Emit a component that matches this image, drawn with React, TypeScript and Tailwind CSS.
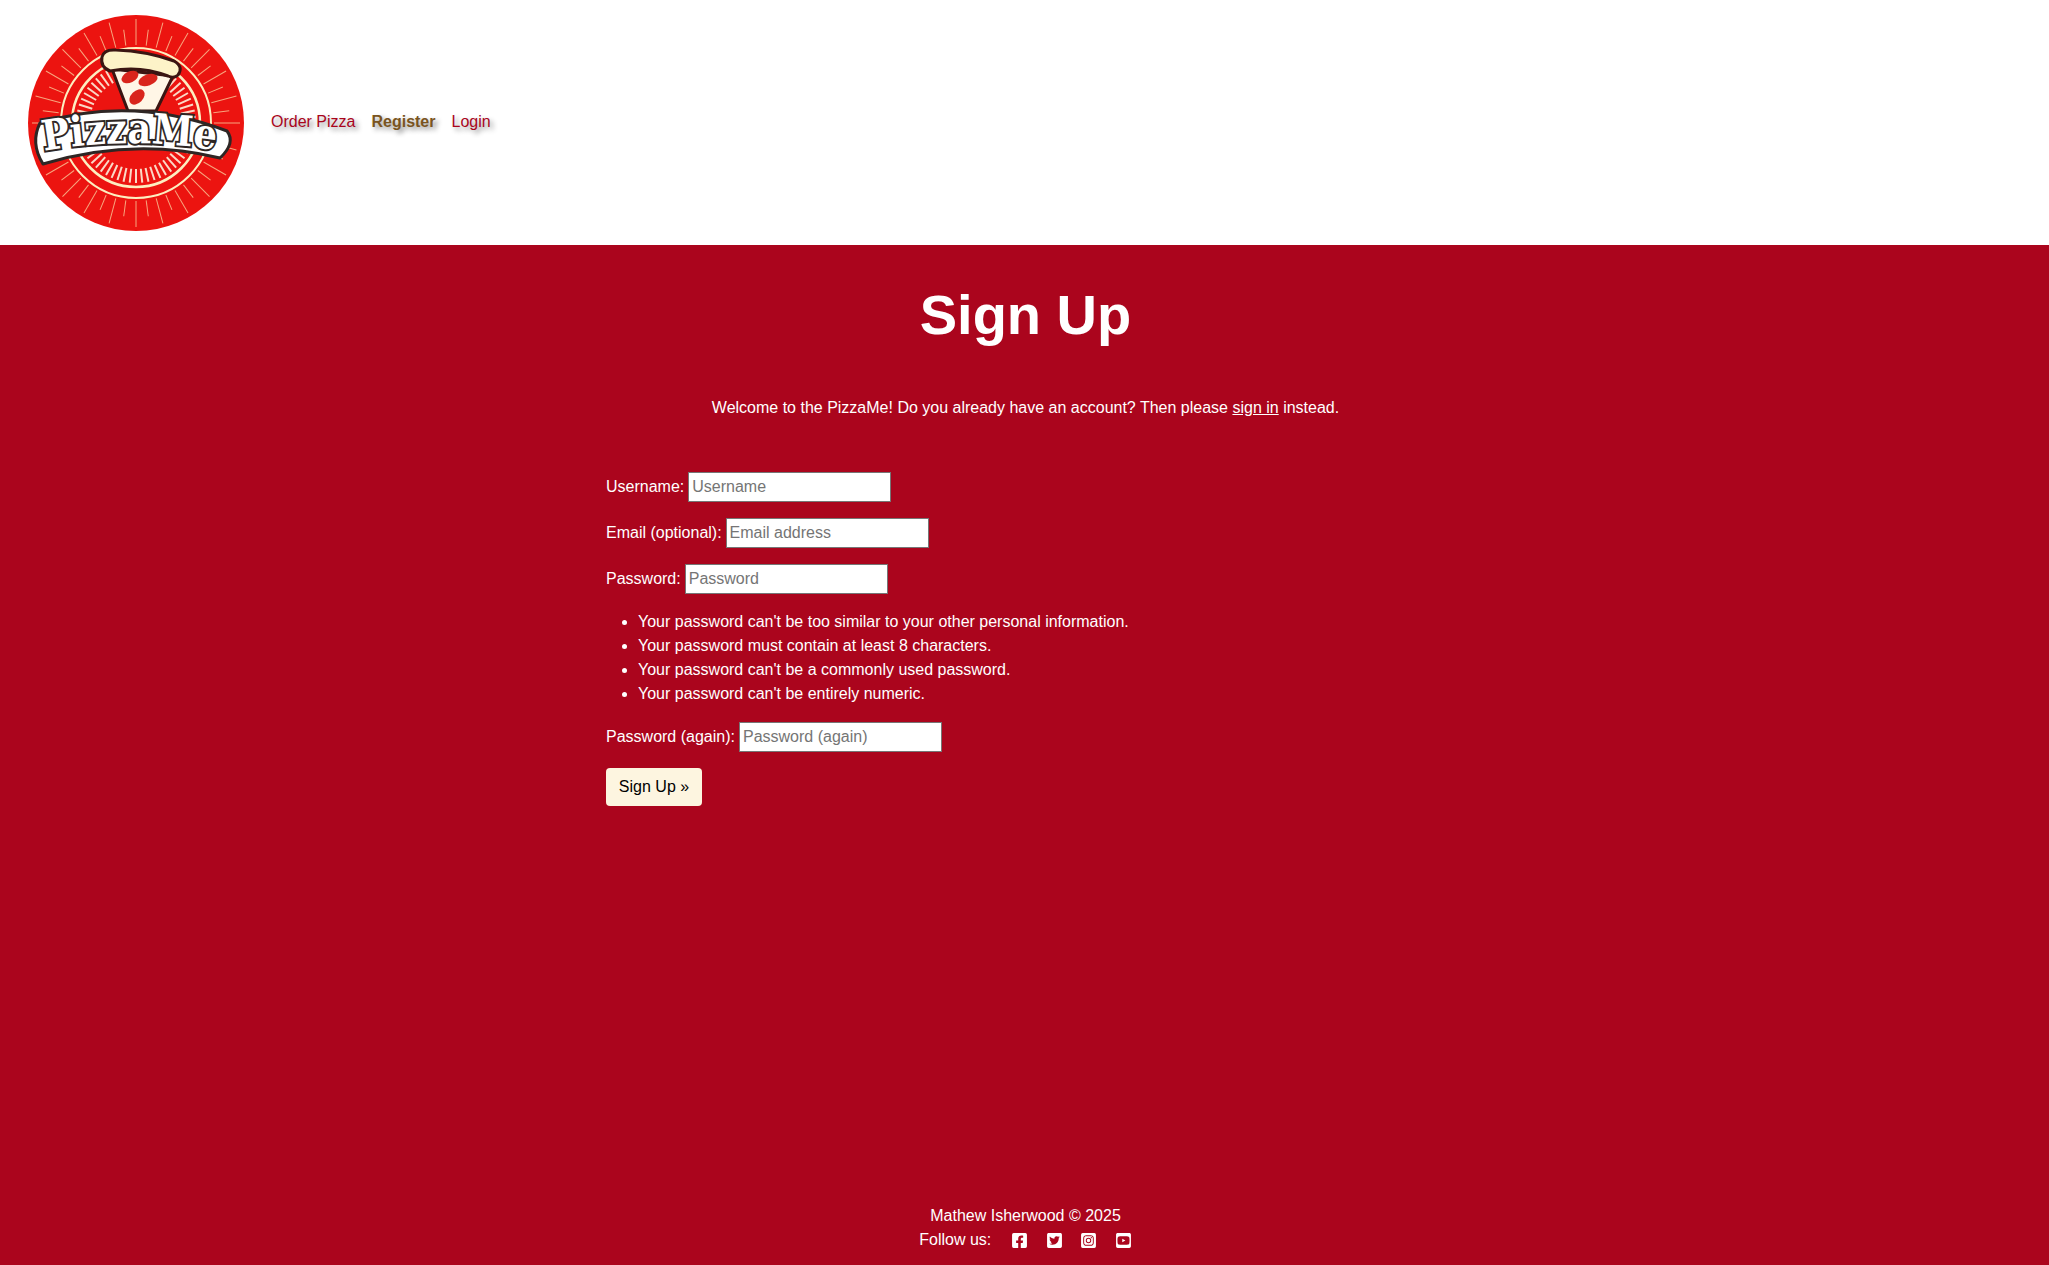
import React from "react";
import { FaFacebookSquare, FaTwitterSquare, FaInstagramSquare, FaYoutubeSquare } from "react-icons/fa";

const rays = Array.from({ length: 48 }, (_, i) => (i * 360) / 48);
const hatch = Array.from({ length: 60 }, (_, i) => (i * 360) / 60);

function Logo() {
    return (
        <svg width="216" height="216" viewBox="0 0 216 216" className="shrink-0">
            <defs>
                <path id="logoCurve" d="M 16 136 Q 105 120 198 137" fill="none" />
            </defs>
            <circle cx="108" cy="108" r="108" fill="#ec1410" />
            {rays.map((deg, i) => (
                <line
                    key={deg}
                    x1="108"
                    y1={i % 2 === 0 ? 4 : 14}
                    x2="108"
                    y2="30"
                    stroke="#f7a67e"
                    strokeWidth="1"
                    transform={`rotate(${deg} 108 108)`}
                />
            ))}
            <circle cx="108" cy="108" r="75" fill="none" stroke="#fdeec0" strokeWidth="2" />
            <circle cx="108" cy="108" r="64" fill="none" stroke="#fdeec0" strokeWidth="2.5" />
            {hatch.map((deg) => (
                <line
                    key={deg}
                    x1="108"
                    y1="48"
                    x2="108"
                    y2="62"
                    stroke="#fbd9c6"
                    strokeWidth="2"
                    transform={`rotate(${deg} 108 108)`}
                />
            ))}
            <path d="M84 54 L100 96 L128 96 L145 61Z" fill="#fff6e6" stroke="#3a1512" strokeWidth="3" strokeLinejoin="round" />
            <path d="M82 56 Q72 52 74 42 Q76 34 88 35 Q118 36 146 46 Q156 52 150 60 Q146 64 140 61 Q112 50 82 56Z" fill="#fdf3c8" stroke="#3a1512" strokeWidth="3" />
            <ellipse cx="102" cy="62" rx="9" ry="5.5" fill="#d9251c" transform="rotate(-25 102 62)" />
            <ellipse cx="120" cy="65" rx="10" ry="5.5" fill="#d9251c" transform="rotate(-20 120 65)" />
            <ellipse cx="109" cy="82" rx="9" ry="6" fill="#d9251c" transform="rotate(-45 109 82)" />
            <path d="M12 108 Q105 80 199 116 Q208 128 192 143 Q105 122 15 149 Q2 128 12 108Z" fill="#fff" stroke="#2e2624" strokeWidth="3" strokeLinejoin="round" />
            <text
                fontFamily="'DejaVu Serif', serif"
                fontWeight="700"
                fontSize="42"
                fill="#fff"
                stroke="#2e2624"
                strokeWidth="4"
                paintOrder="stroke"
                textLength="172"
                lengthAdjust="spacingAndGlyphs"
            >
                <textPath href="#logoCurve">PizzaMe</textPath>
            </text>
        </svg>
    );
}

function Field({ label, placeholder, type = "text" }: { label: string; placeholder: string; type?: string }) {
    return (
        <p className="mb-4 flex items-center gap-1">
            <label>{label}:</label>
            <input
                type={type}
                placeholder={placeholder}
                className="h-[30px] w-[203px] border border-[#767676] bg-white px-[3px] text-black placeholder:text-[#757575]"
            />
        </p>
    );
}

export default function App() {
    return (
        <div className="flex min-h-screen flex-col bg-[#ab051d] font-['Liberation_Sans',Arial,sans-serif] text-base text-white">
            <header className="flex h-[245px] items-center bg-white pl-[28px]">
                <Logo />
                <nav className="mb-[2px] ml-[27px] flex gap-4 text-[#a9051c] [text-shadow:3px_3px_5px_rgba(0,0,0,0.45)]">
                    <a href="#">Order Pizza</a>
                    <a href="#" className="font-bold text-[#7a5420]">Register</a>
                    <a href="#">Login</a>
                </nav>
            </header>

            <main className="flex flex-1 flex-col">
                <h1 className="mt-[36px] pl-[2px] text-center text-[56px] leading-[67px] font-bold">Sign Up</h1>
                <p className="mt-[48px] pl-[2px] text-center leading-6">
                    Welcome to the PizzaMe! Do you already have an account? Then please <a href="#" className="underline">sign in</a> instead.
                </p>

                <form className="mt-[52px] pl-[606px]">
                    <Field label="Username" placeholder="Username" />
                    <Field label="Email (optional)" placeholder="Email address" type="email" />
                    <Field label="Password" placeholder="Password" type="password" />
                    <ul className="mb-4 list-disc pl-8 leading-6">
                        <li>Your password can't be too similar to your other personal information.</li>
                        <li>Your password must contain at least 8 characters.</li>
                        <li>Your password can't be a commonly used password.</li>
                        <li>Your password can't be entirely numeric.</li>
                    </ul>
                    <Field label="Password (again)" placeholder="Password (again)" type="password" />
                    <button type="button" className="h-[38px] w-[96px] rounded bg-[#fdf5e0] text-black">
                        Sign Up »
                    </button>
                </form>
            </main>

            <footer className="pb-[13px] text-center leading-6">
                <p className="pl-[2px]">Mathew Isherwood © 2025</p>
                <div className="flex items-center justify-center pl-[2px]">
                    <span>Follow us:</span>
                    <div className="ml-[20px] flex gap-[17.5px] text-[17px]">
                        <FaFacebookSquare />
                        <FaTwitterSquare />
                        <FaInstagramSquare />
                        <FaYoutubeSquare />
                    </div>
                </div>
            </footer>
        </div>
    );
}
